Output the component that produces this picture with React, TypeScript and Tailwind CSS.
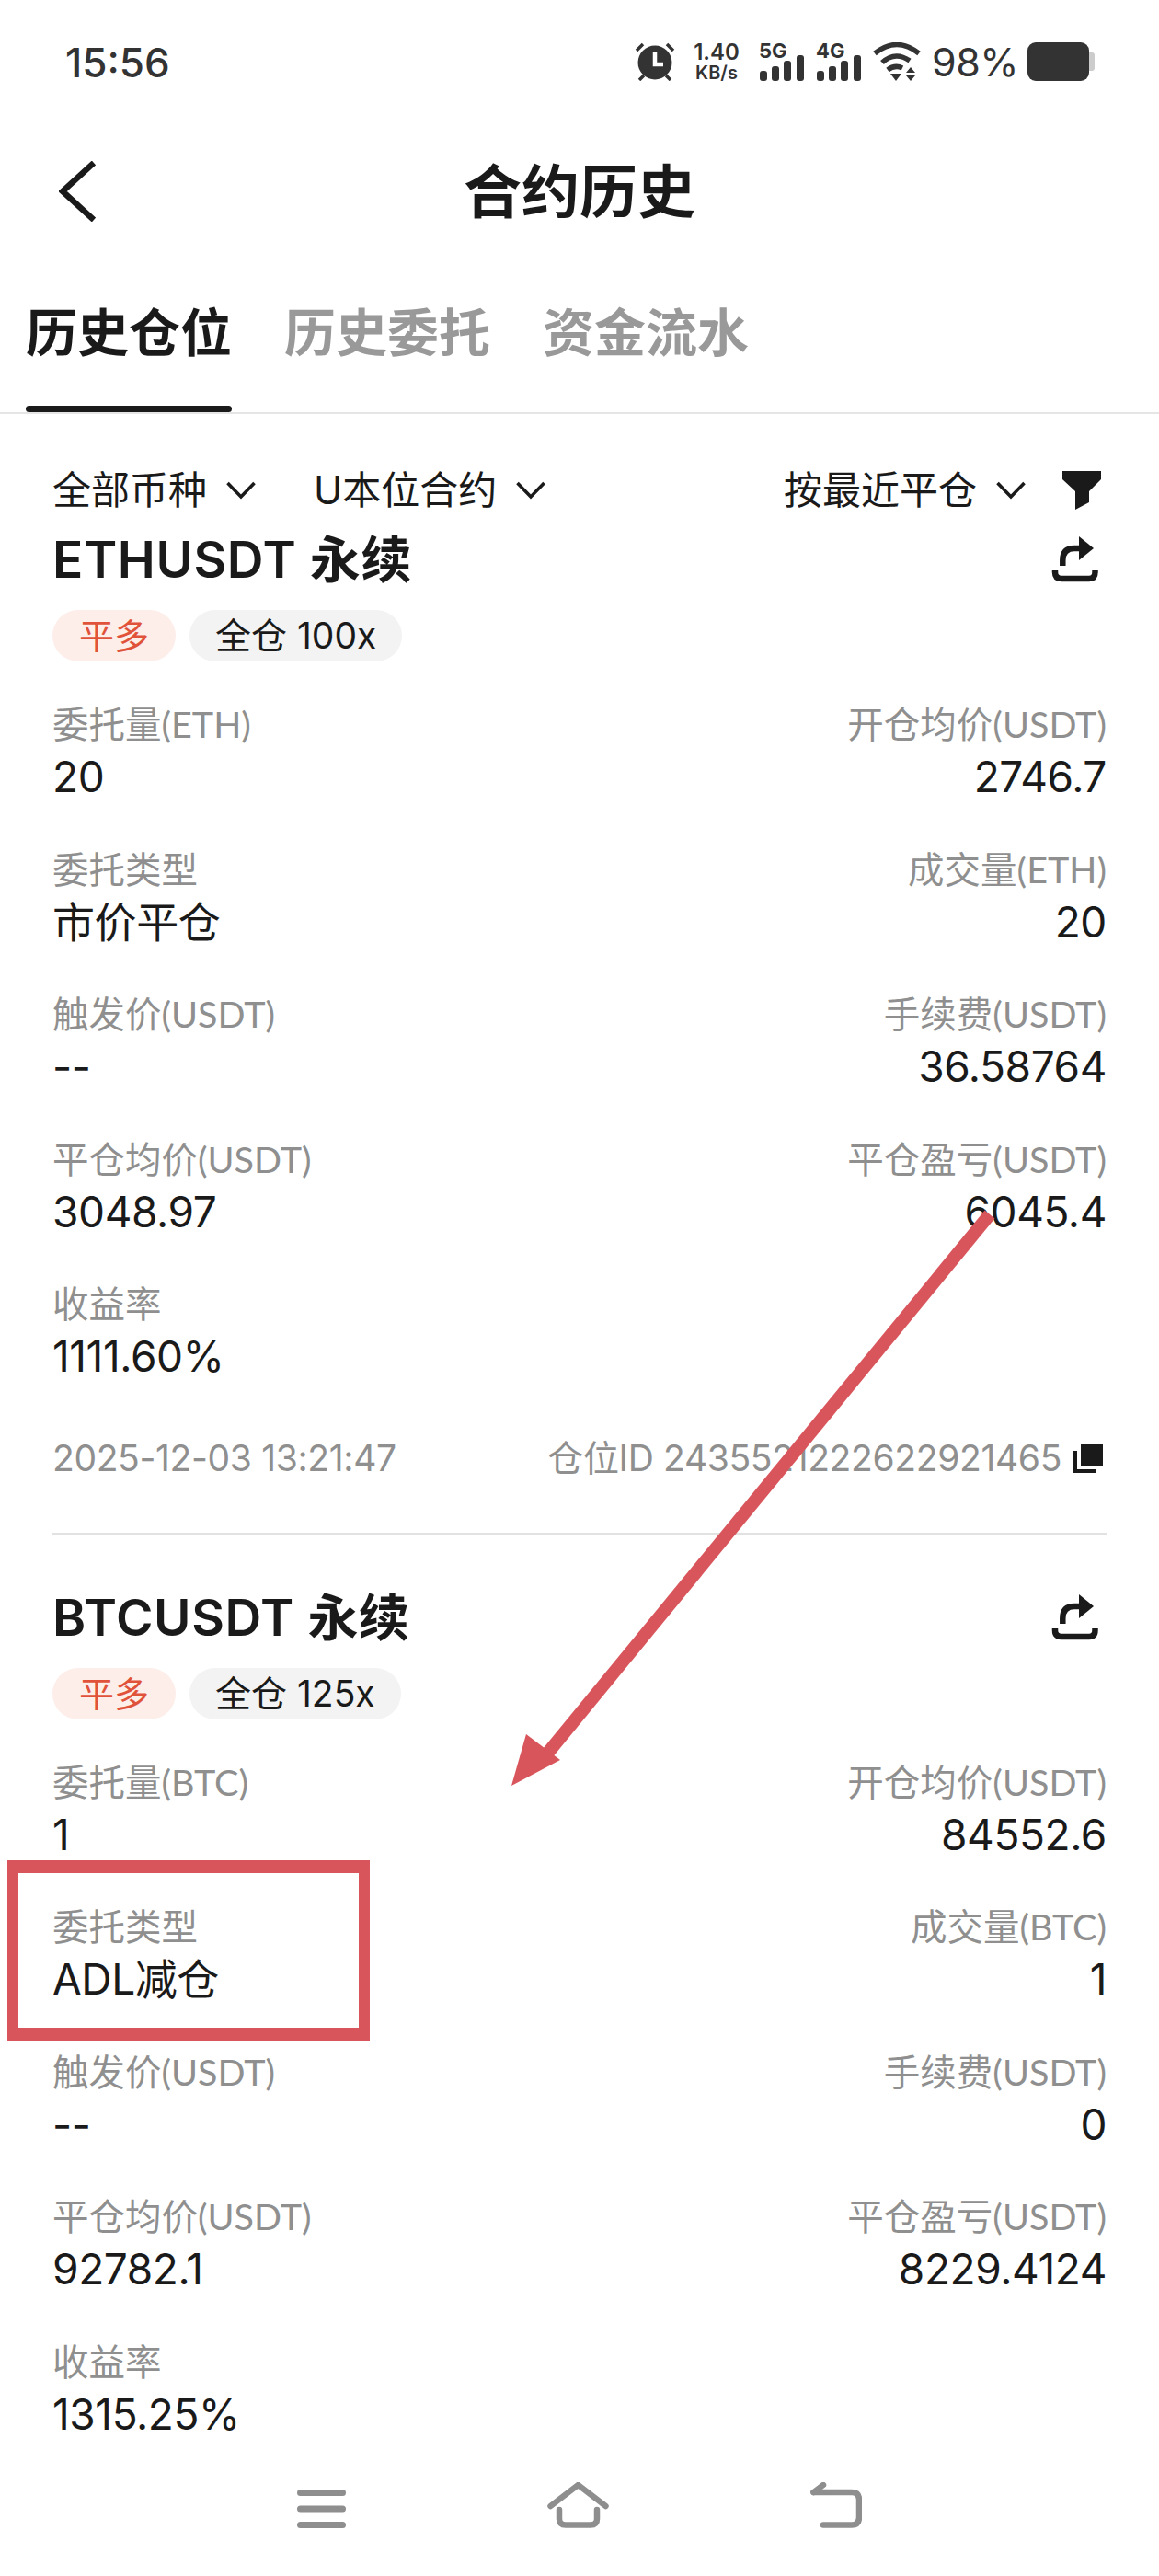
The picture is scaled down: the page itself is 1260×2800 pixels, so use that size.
import React from "react";

const FONT = 'font-["Inter","Noto_Sans_CJK_SC",sans-serif]';

type Row = [string, string, string, string];

function Chevron() {
  return (
    <svg width="32" height="20" viewBox="0 0 32 20" fill="none" stroke="#1a1a1a" strokeWidth="3.6">
      <path d="M1.5 2 L16 17 L30.5 2" />
    </svg>
  );
}

function Filter({ text }: { text: string }) {
  return (
    <div className="flex items-center gap-[21px]">
      <span className="text-[42px] leading-[56px] text-[#1a1a1a]">{text}</span>
      <Chevron />
    </div>
  );
}

function ShareIcon() {
  return (
    <svg width="51" height="52" viewBox="0 0 51 52" fill="none">
      <path d="M4 38 V40 Q4 47 11 47 H41 Q47.5 47 47.5 40 V38" stroke="#1a1a1a" strokeWidth="6.5" />
      <path d="M12.3 33 V27 Q12.3 14 25 14 H33" stroke="#1a1a1a" strokeWidth="6.5" />
      <path d="M30 1 L46 14 L30 27 Z" fill="#1a1a1a" />
    </svg>
  );
}

function Badge({ tone, children }: { tone: "red" | "gray"; children: React.ReactNode }) {
  return (
    <span
      className={
        tone === "red"
          ? "h-[56px] px-[29px] rounded-[28px] bg-[#fdeeea] text-[#e0533a] text-[38px] leading-[56px]"
          : "h-[56px] px-[28px] rounded-[28px] bg-[#f3f3f3] text-[#1a1a1a] text-[39px] leading-[56px]"
      }
    >
      {children}
    </span>
  );
}

function Cell({ label, value, right }: { label: string; value: string; right?: boolean }) {
  return (
    <div className={right ? "flex flex-col items-end" : "flex flex-col items-start"}>
      <span className='h-[44px] text-[39.5px] leading-[44px] text-[#8f8f8f] font-["Lato","Noto_Sans_CJK_SC",sans-serif]'>{label}</span>
      <span className="mt-[7px] h-[56px] text-[46px] tracking-[-0.4px] leading-[56px] text-[#1a1a1a]">{value}</span>
    </div>
  );
}

function Position({ symbol, lev, rows, footer }: { symbol: string; lev: string; rows: Row[]; footer: boolean }) {
  return (
    <section className="flex flex-col">
      <div className="h-[76px] flex items-center justify-between pr-[9px]">
        <h2 className="text-[55px] tracking-[0.6px] leading-[76px] font-semibold text-[#1a1a1a]">{symbol} 永续</h2>
        <ShareIcon />
      </div>
      <div className="mt-[17px] flex gap-[15px]">
        <Badge tone="red">平多</Badge>
        <Badge tone="gray">全仓 {lev}</Badge>
      </div>
      <div className="mt-[46px] flex flex-col">
        {rows.map((r) => (
          <div key={r[0]} className="h-[157.5px] flex justify-between">
            <Cell label={r[0]} value={r[1]} />
            <Cell label={r[2]} value={r[3]} right />
          </div>
        ))}
      </div>
      {footer && (
        <>
          <div className="h-[65px] flex items-center justify-between text-[39px] tracking-[-0.35px] text-[#8f8f8f]">
            <span>2025-12-03 13:21:47</span>
            <div className="flex items-center gap-[13px] pr-[4px]">
              <span>仓位ID 2435521222622921465</span>
              <svg width="32" height="31" viewBox="0 0 32 31" fill="#1a1a1a">
                <rect x="8" y="0" width="24" height="23" />
                <path d="M0 7 H4 V27 H24 V31 H0 Z" />
              </svg>
            </div>
          </div>
          <div className="mt-[48px] h-[2px] bg-[#e2e2e2]" />
          <div className="h-[52px]" />
        </>
      )}
    </section>
  );
}

const eth: Row[] = [
  ["委托量(ETH)", "20", "开仓均价(USDT)", "2746.7"],
  ["委托类型", "市价平仓", "成交量(ETH)", "20"],
  ["触发价(USDT)", "--", "手续费(USDT)", "36.58764"],
  ["平仓均价(USDT)", "3048.97", "平仓盈亏(USDT)", "6045.4"],
  ["收益率", "1111.60%", "", ""],
];

const btc: Row[] = [
  ["委托量(BTC)", "1", "开仓均价(USDT)", "84552.6"],
  ["委托类型", "ADL减仓", "成交量(BTC)", "1"],
  ["触发价(USDT)", "--", "手续费(USDT)", "0"],
  ["平仓均价(USDT)", "92782.1", "平仓盈亏(USDT)", "8229.4124"],
  ["收益率", "1315.25%", "", ""],
];

function Signal({ tag }: { tag: string }) {
  return (
    <div className="relative w-[49px] h-[42px]">
      <span className="absolute left-0 top-[-3px] text-[22px] leading-[24px] font-bold text-[#333333]">{tag}</span>
      <svg className="absolute left-0 top-0" width="49" height="42" viewBox="0 0 49 42" fill="#333333">
        <rect x="1" y="31" width="8" height="11" rx="3" />
        <rect x="14" y="26" width="8" height="16" rx="3" />
        <rect x="27" y="20" width="8" height="22" rx="3" />
        <rect x="41" y="14" width="8" height="28" rx="3" />
      </svg>
    </div>
  );
}

function StatusBar() {
  return (
    <div className="h-[136px] pt-[46px] pl-[71px] pr-[70px] flex justify-between items-start text-[#333333]">
      <span className="text-[44px] leading-[44px] font-medium">15:56</span>
      <div className="flex items-start">
        <svg width="44" height="42" viewBox="0 0 44 42" fill="#333333">
          <circle cx="22" cy="22" r="18.5" />
          <path d="M22 11 V24 H31" stroke="#fff" strokeWidth="4.5" fill="none" />
          <path d="M2 9 L9 2 M42 9 L35 2 M5 41 L10 36 M39 41 L34 36" stroke="#333333" strokeWidth="3.5" />
        </svg>
        <div className="ml-[19px] w-[52px] flex flex-col items-center font-semibold leading-none">
          <span className="text-[24px] h-[24px] leading-[22px]">1.40</span>
          <span className="text-[20px] h-[18px] leading-[18px]">KB/s</span>
        </div>
        <div className="ml-[20px]">
          <Signal tag="5G" />
        </div>
        <div className="ml-[13px]">
          <Signal tag="4G" />
        </div>
        <svg className="ml-[13px]" width="52" height="42" viewBox="0 0 52 42" fill="none" stroke="#333333" strokeWidth="5.5">
          <path d="M2 12 Q26 -7 50 12" />
          <path d="M10 22 Q24 9 40 20" />
          <path d="M16 30 Q24 24 32 28" />
          <path d="M19 34 H31 L25 42 Z" fill="#333333" stroke="none" />
          <path d="M36 33 L41 27 L46 33 Z M36 36 H46 L41 42 Z" fill="#333333" stroke="none" />
        </svg>
        <span className="ml-[12px] text-[43px] tracking-[-0.5px] leading-[44px] mt-[-1px]">98%</span>
        <div className="ml-[10px] flex items-center">
          <div className="w-[67px] h-[42px] rounded-[9px] bg-[#333333]" />
          <div className="w-[6px] h-[20px] rounded-r-[3px] bg-[#cccccc]" />
        </div>
      </div>
    </div>
  );
}

function Tab({ text, active }: { text: string; active?: boolean }) {
  return (
    <div className="flex flex-col w-[224px]">
      <span
        className={
          active
            ? "h-[161px] pt-[48px] text-[56px] leading-[68px] font-bold text-[#1a1a1a] text-center"
            : "h-[161px] pt-[48px] text-[56px] leading-[68px] font-bold text-[#999999] text-center"
        }
      >
        {text}
      </span>
      {active && <span className="h-[7px] rounded-full bg-[#1a1a1a]" />}
    </div>
  );
}

export default function App() {
  return (
    <div className={`${FONT} relative w-[1260px] h-[2800px] bg-white overflow-hidden flex flex-col`}>
      <StatusBar />

      <div className="h-[144px] px-[64px] flex items-center">
        <svg width="40" height="66" viewBox="0 0 40 66" fill="none" stroke="#1a1a1a" strokeWidth="6.5">
          <path d="M38 2 L4 33 L38 64" />
        </svg>
        <h1 className="flex-1 text-center text-[63px] leading-[80px] font-bold text-[#1a1a1a]">合约历史</h1>
        <div className="w-[40px]" />
      </div>

      <div className="h-[170px] pl-[28px] flex gap-[57px] border-b-2 border-[#e5e5e5]">
        <Tab text="历史仓位" active />
        <Tab text="历史委托" />
        <Tab text="资金流水" />
      </div>

      <main className="flex-1 min-h-0 overflow-hidden px-[57px]">
        <div className="h-[120px] pt-[46px] flex items-center justify-between">
          <div className="flex items-center gap-[63px]">
            <Filter text="全部币种" />
            <Filter text="U本位合约" />
          </div>
          <div className="flex items-center gap-[40px] pr-[6px]">
            <Filter text="按最近平仓" />
            <svg width="42" height="42" viewBox="0 0 42 42" fill="#1a1a1a">
              <path d="M0 0 H42 V9 L29 22 V34 L14 42 V22 L0 9 Z" />
            </svg>
          </div>
        </div>
        <Position symbol="ETHUSDT" lev="100x" rows={eth} footer />
        <Position symbol="BTCUSDT" lev="125x" rows={btc} footer={false} />
      </main>

      <nav className="h-[140px] pt-[38px] flex justify-center items-start gap-[219px]">
        <svg width="53" height="50" viewBox="0 0 53 50" fill="#8e8e8e">
          <rect x="0" y="8" width="53" height="7" rx="3.5" />
          <rect x="0" y="25.5" width="53" height="7" rx="3.5" />
          <rect x="0" y="43" width="53" height="7" rx="3.5" />
        </svg>
        <svg width="67" height="50" viewBox="0 0 67 50" fill="none" stroke="#8e8e8e" strokeWidth="6.5" strokeLinecap="round">
          <path d="M3.5 26 L33.5 3 L63.5 26" strokeLinejoin="round" />
          <path d="M13 30 V40 Q13 46.5 20 46.5 H47 Q54 46.5 54 40 V30" />
        </svg>
        <svg width="56" height="50" viewBox="0 0 56 50" fill="none" stroke="#8e8e8e" strokeWidth="6.5" strokeLinecap="round">
          <path d="M3.5 11 H45 Q53 11 53 19 V38 Q53 46.5 45 46.5 H14" />
          <path d="M3.5 11 L14 3" />
        </svg>
      </nav>

      <svg className="absolute left-0 top-0 pointer-events-none" width="1260" height="2800" viewBox="0 0 1260 2800">
        <line x1="1076" y1="1320" x2="595" y2="1906" stroke="#d9555c" strokeWidth="14" />
        <polygon points="556,1941 572,1885 609,1913" fill="#d9555c" />
      </svg>
      <div className="absolute left-[8px] top-[2022px] w-[394px] h-[196px] border-x-[12px] border-y-[14px] border-[#d9555c]" />
    </div>
  );
}
